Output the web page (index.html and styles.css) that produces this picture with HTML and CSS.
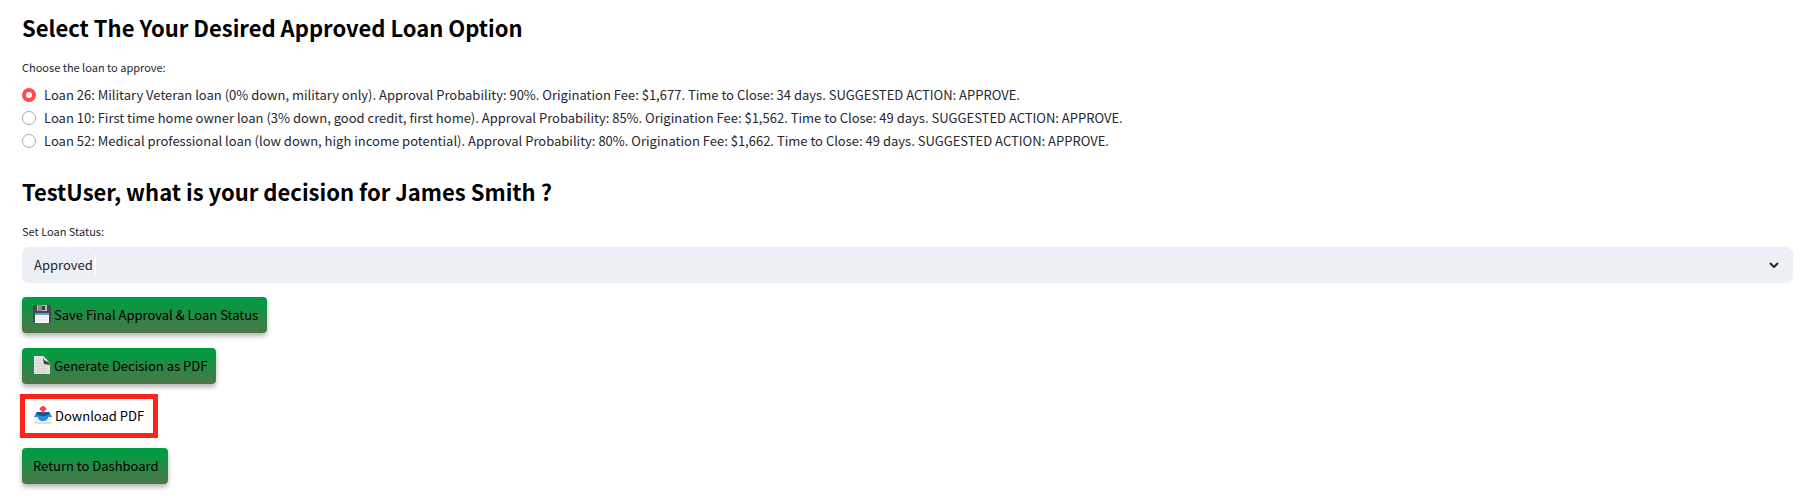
FILE: index.html
```html
<!DOCTYPE html>
<html lang="en">
<head>
<meta charset="utf-8">
<meta name="viewport" content="width=device-width, initial-scale=1">
<title>Loan Decision</title>
<link rel="stylesheet" href="styles.css">
</head>
<body>
<main class="page">
  <h2 class="heading">Select The Your Desired Approved Loan Option</h2>
  <fieldset class="loans">
    <legend class="field-label">Choose the loan to approve:</legend>
    <label class="loan"><input class="radio" type="radio" name="loan" checked><span>Loan 26: Military Veteran loan (0% down, military only). Approval Probability: 90%. Origination Fee: $1,677. Time to Close: 34 days. SUGGESTED ACTION: APPROVE.</span></label>
    <label class="loan"><input class="radio" type="radio" name="loan"><span>Loan 10: First time home owner loan (3% down, good credit, first home). Approval Probability: 85%. Origination Fee: $1,562. Time to Close: 49 days. SUGGESTED ACTION: APPROVE.</span></label>
    <label class="loan"><input class="radio" type="radio" name="loan"><span>Loan 52: Medical professional loan (low down, high income potential). Approval Probability: 80%. Origination Fee: $1,662. Time to Close: 49 days. SUGGESTED ACTION: APPROVE.</span></label>
  </fieldset>

  <h2 class="heading">TestUser, what is your decision for James Smith ?</h2>
  <label class="field-label" for="status">Set Loan Status:</label>
  <div class="select-wrap">
    <select class="select" id="status"><option>Approved</option></select>
    <span class="caret"></span>
    <svg class="chevron" viewBox="0 0 10 6" aria-hidden="true"><path d="M1 1l4 4 4-4" fill="none" stroke="#262730" stroke-width="2"/></svg>
  </div>

  <div class="actions">
    <button class="button" type="button">
      <svg class="icon" viewBox="0 0 18 18" aria-hidden="true">
        <path d="M1 0h16l1 1v16l-1 1H1l-1-1V1z" fill="#48484c"/>
        <path d="M4 0h10v6H4z" fill="#b9babd"/>
        <path d="M5 0h4v6H5z" fill="#88898d"/>
        <path d="M9 1h3v4H9z" fill="#3c3c40"/>
        <path d="M2 8h14v10H2z" fill="#f4f5f7"/>
        <path d="M2 8h14v2H2z" fill="#5f9fe0"/>
        <path d="M3 12h12M3 15h12" stroke="#e4e6ea" stroke-width="1"/>
      </svg>
      <span>Save Final Approval &amp; Loan Status</span>
    </button>
    <button class="button" type="button">
      <svg class="icon" viewBox="0 0 18 18" aria-hidden="true">
        <path d="M1 0h9l7 8v10H1z" fill="#e2e2e2"/>
        <path d="M3 4h5M3 7h6M3 10h11M3 13h11M3 16h11" stroke="#d0d0d0" stroke-width="1"/>
        <path d="M10 1l7 7-1 1-5-1q-1-3-1-7z" fill="#444a46"/>
        <path d="M10 0l6 6-5-2z" fill="#f4f4f4"/>
      </svg>
      <span>Generate Decision as PDF</span>
    </button>
    <div class="highlight">
      <button class="button button-plain" type="button">
        <svg class="icon" viewBox="0 0 18 18" aria-hidden="true">
          <path d="M0 11h18v5q0 2-2 2H2q-2 0-2-2z" fill="#dededb"/>
          <path d="M0 11h18v5H0z" fill="#f3f3ef"/>
          <path d="M3 6h12l3 5h-4q-1 4-5 4t-5-4H0z" fill="#1c76c4"/>
          <path d="M3 6h12l1 2-3 2H5L2 8z" fill="#10589d"/>
          <path d="M0 11l2-3 4 2h6l4-2 2 3h-4q-1 4-5 4t-5-4z" fill="#2d8ddb"/>
          <path d="M8 4h2v3H8z" fill="#e33b3e"/>
          <path d="M6 4q-1-1 0-2l2-2h2l2 2q1 1 0 2L9 6z" fill="#f2484b"/>
        </svg>
        <span>Download PDF</span>
      </button>
    </div>
    <button class="button" type="button"><span>Return to Dashboard</span></button>
  </div>
</main>
</body>
</html>
```

FILE: styles.css
```css
* { box-sizing: border-box; }

body {
  margin: 0;
  background: #fff;
  color: #262730;
  font-family: "Noto Sans CJK SC", "Noto Sans", sans-serif;
  font-size: 13px;
  line-height: 23px;
}

.page {
  display: flex;
  flex-direction: column;
  padding: 11px 20px 16px 22px;
}

.heading {
  margin: 0 0 14px;
  color: #000;
  font-size: 22px;
  font-weight: 700;
  line-height: 32px;
}

.field-label {
  display: block;
  padding: 0;
  font-size: 11px;
  line-height: 20px;
}

.loans {
  min-width: 0;
  margin: 0 0 23px;
  padding: 0;
  border: 0;
}

.loans .field-label { margin-bottom: 6px; }

.loan {
  display: flex;
  align-items: center;
  gap: 8px;
}

.radio {
  appearance: none;
  flex: none;
  width: 14px;
  height: 14px;
  margin: 0;
  border: 1px solid #a9aaae;
  border-radius: 50%;
  background: #fff;
}

.radio:checked {
  border: 4px solid #ff4b4b;
}

.select-wrap {
  position: relative;
  margin: 6px 0 14px;
}

.select {
  appearance: none;
  display: block;
  width: 100%;
  height: 36px;
  padding: 0 36px 2px 12px;
  border: 0;
  border-radius: 7px;
  background: #eceff4;
  color: #262730;
  font: inherit;
}

.caret {
  position: absolute;
  top: 8px;
  left: 72px;
  width: 2px;
  height: 20px;
  background: #fff;
}

.chevron {
  position: absolute;
  top: 15px;
  right: 14px;
  width: 10px;
  height: 6px;
}

.actions {
  display: flex;
  flex-direction: column;
  align-items: flex-start;
  gap: 15px;
}

.button {
  display: flex;
  align-items: center;
  gap: 3px;
  height: 36px;
  padding: 0 9px 2px 11px;
  border: 0;
  border-radius: 4px;
  background: linear-gradient(#009c41 10%, #4e7548);
  box-shadow: 0 3px 5px rgba(0, 0, 0, 0.3);
  color: #000;
  font: inherit;
}

.icon {
  flex: none;
  width: 18px;
  height: 18px;
}

.highlight {
  margin: -5px -2px;
  border: 5px solid #ff2419;
}

.button-plain {
  height: 34px;
  padding: 0 9px 2px;
  background: #fff;
  box-shadow: none;
}
```
